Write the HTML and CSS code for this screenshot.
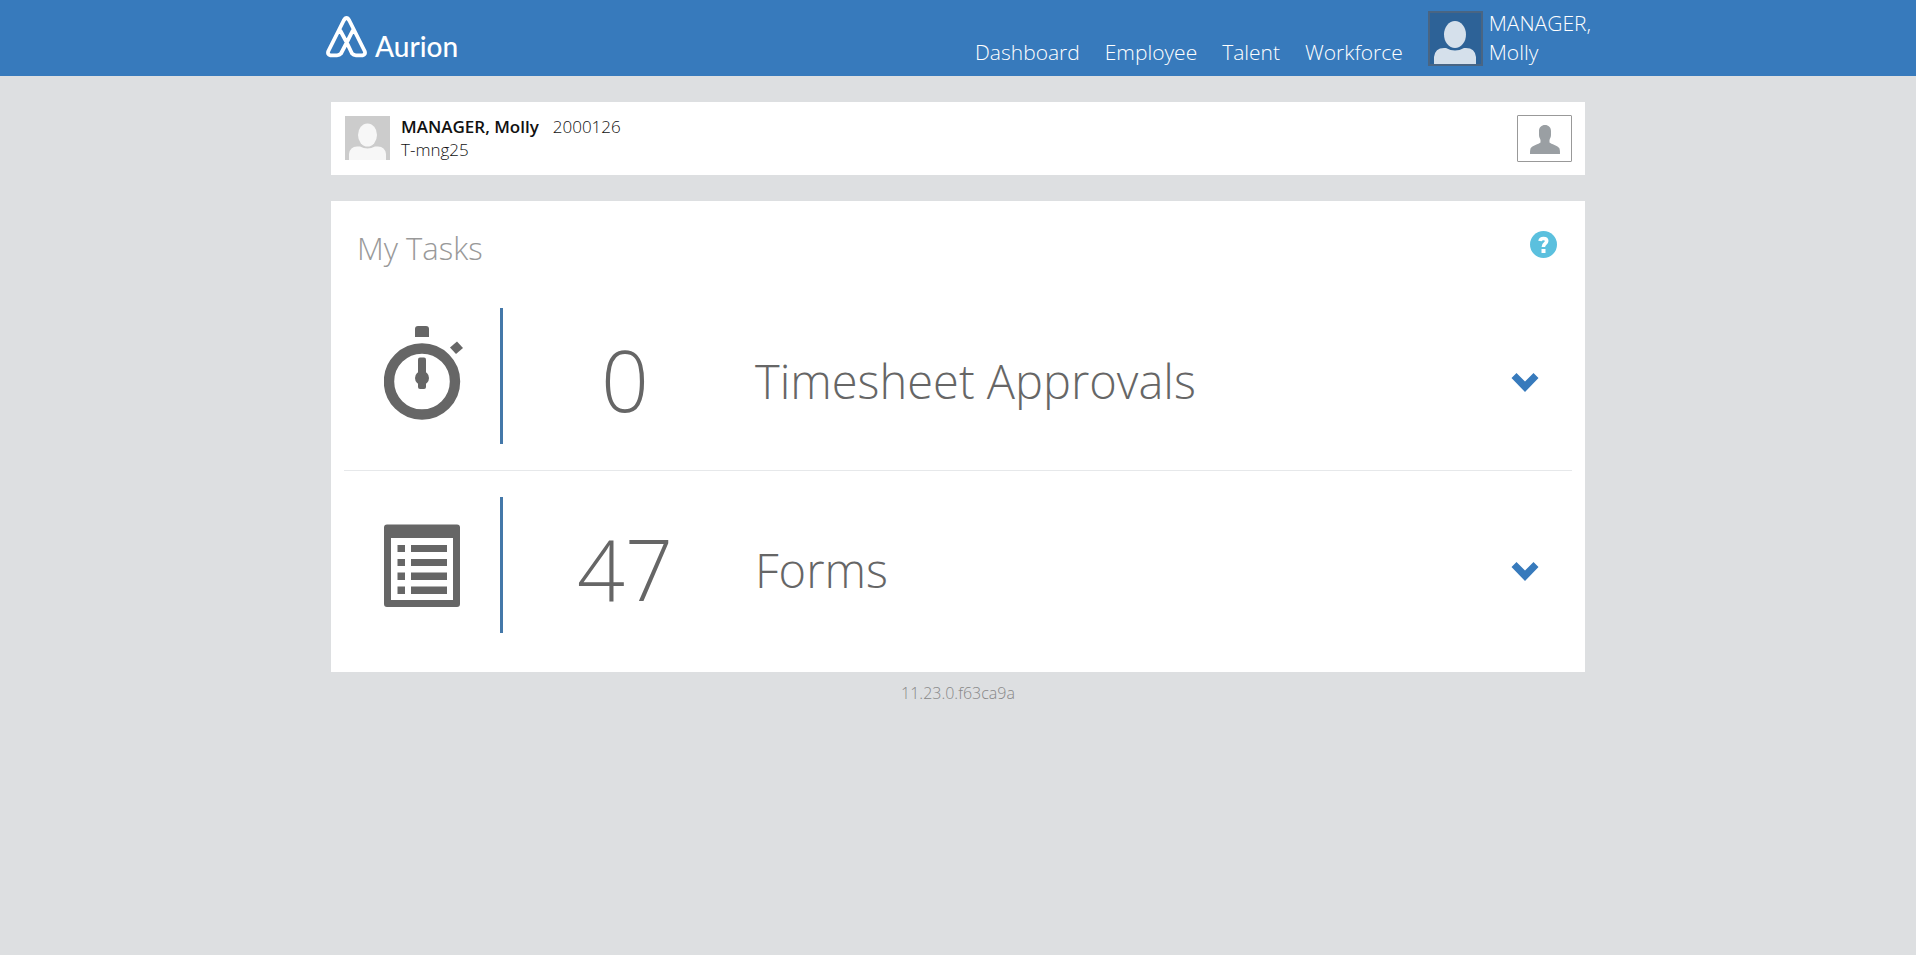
FILE: index.html
```html
<!DOCTYPE html>
<html lang="en">
<head>
<meta charset="utf-8">
<meta name="viewport" content="width=device-width, initial-scale=1">
<title>Aurion</title>
<link rel="stylesheet" href="styles.css">
</head>
<body>
<header class="topbar">
  <div class="topbar-inner">
    <a class="brand" href="#">
      <svg class="brand-mark" viewBox="0 0 42 42" aria-hidden="true">
        <g fill="none" stroke="#fff" stroke-width="3.8" stroke-linejoin="round" stroke-linecap="round">
          <path d="M14.500 15 L21 27 L26 37.500 Q27.500 39.300 30 39.300 H36.500 Q40 38.500 38.600 35 L23.300 4.500 Q20.500 -0.500 17.700 4.500 L2.400 35 Q1 38.500 4.500 39.300 H11 Q13.500 39.300 15 37.500 L20.500 27 L26.500 15"/>
        </g>
      </svg>
      <span class="brand-name">Aurion</span>
    </a>
    <nav class="nav">
      <a href="#">Dashboard</a>
      <a href="#">Employee</a>
      <a href="#">Talent</a>
      <a href="#">Workforce</a>
    </nav>
    <a class="user" href="#">
      <svg class="user-photo" viewBox="0 0 55 55" aria-hidden="true">
        <rect x="1" y="1" width="53" height="53" fill="#2d6297" stroke="#496583" stroke-width="2"/>
        <ellipse cx="27" cy="23.500" rx="11" ry="13.500" fill="#d5e0eb"/>
        <path d="M6 53 V46 Q7 37 16 37 H18 Q27 42 36 37 H38 Q47 37 48 46 V53 Z" fill="#d5e0eb"/>
      </svg>
      <span>MANAGER,<br>Molly</span>
    </a>
  </div>
</header>
<main class="page">
  <section class="card person">
    <svg class="person-photo" viewBox="0 0 45 44" aria-hidden="true">
      <rect width="45" height="44" fill="#ccc"/>
      <ellipse cx="22.500" cy="19" rx="9.500" ry="11.500" fill="#f7f7f7"/>
      <path d="M4 44 V38 Q5 30.500 12 30.500 H15 Q22.500 34.500 30 30.500 H33 Q40 30.500 41 38 V44 Z" fill="#f7f7f7"/>
    </svg>
    <div class="person-text">
      <div><strong>MANAGER, Molly</strong><span class="person-id">2000126</span></div>
      <div>T-mng25</div>
    </div>
    <button class="person-button" type="button" aria-label="Profile">
      <svg width="30" height="29" viewBox="0 0 30 29" aria-hidden="true">
        <path d="M15 0 C18.500 0 21 2.500 21 6 V10 C21 12 20 13.500 19.500 15 V17.500 C21 19 28 20.500 29.500 23.500 Q30 25 30 29 H0 Q0 25 0.500 23.500 C2 20.500 9 19 10.500 17.500 V15 C10 13.500 9 12 9 10 V6 C9 2.500 11.500 0 15 0 Z" fill="#9a9fa3"/>
      </svg>
    </button>
  </section>
  <section class="card tasks">
    <div class="tasks-head">
      <h1>My Tasks</h1>
      <button class="plain" type="button" aria-label="Help">
        <svg width="27" height="27" viewBox="0 0 27 27" aria-hidden="true">
          <circle cx="13.500" cy="13.500" r="13.500" fill="#5bc0de"/>
          <path d="M10 10 Q10.500 7.500 13.500 7.500 Q16.700 7.500 16.700 10 Q16.700 11.500 15 12.700 Q13.400 13.800 13.400 16" fill="none" stroke="#fff" stroke-width="3.600"/>
          <rect x="11.500" y="18" width="4" height="4" fill="#fff"/>
        </svg>
      </button>
    </div>
    <article class="task">
      <div class="task-icon">
        <svg width="80" height="100" viewBox="0 0 80 100" aria-hidden="true">
          <g fill="#666">
            <path d="M31 11 V3 Q31 0 34 0 H42 Q45 0 45 3 V11 Z"/>
            <path d="M73 15.500 L79 22 L72 28 L66 21.500 Z"/>
            <rect x="34" y="31.500" width="8" height="31.500" rx="2"/>
            <circle cx="38" cy="52" r="7"/>
          </g>
          <circle cx="38" cy="55.500" r="33" fill="none" stroke="#666" stroke-width="10.400"/>
        </svg>
      </div>
      <div class="task-count">0</div>
      <h2>Timesheet Approvals</h2>
      <button class="plain toggle" type="button" aria-label="Show timesheet approvals">
        <svg width="28" height="20" viewBox="0 0 28 20" aria-hidden="true"><path d="M0.500 5 L5.500 0 L14 8.500 L22.500 0 L27.500 5 L14 19 Z" fill="#377abc"/></svg>
      </button>
    </article>
    <article class="task">
      <div class="task-icon">
        <svg width="80" height="86" viewBox="0 -2 80 86" aria-hidden="true">
          <path fill="#666" fill-rule="evenodd" d="M3 0.500 H73 Q76 0.500 76 3.500 V80 Q76 83 73 83 H3 Q0 83 0 80 V3.500 Q0 0.500 3 0.500 Z M7 14 V76 H69 V14 Z"/>
          <path fill="#666" d="M13.500 21 H21 V28 H13.500 Z M27 21 H63 V28 H27 Z M13.500 35 H21 V42 H13.500 Z M27 35 H63 V42 H27 Z M13.500 48.500 H21 V56 H13.500 Z M27 48.500 H63 V56 H27 Z M13.500 62.500 H21 V70 H13.500 Z M27 62.500 H63 V70 H27 Z"/>
        </svg>
      </div>
      <div class="task-count">47</div>
      <h2>Forms</h2>
      <button class="plain toggle" type="button" aria-label="Show forms">
        <svg width="28" height="20" viewBox="0 0 28 20" aria-hidden="true"><path d="M0.500 5 L5.500 0 L14 8.500 L22.500 0 L27.500 5 L14 19 Z" fill="#377abc"/></svg>
      </button>
    </article>
  </section>
  <footer class="version">11.23.0.f63ca9a</footer>
</main>
</body>
</html>
```
FILE: styles.css
```css
* { box-sizing: border-box; }
body {
  margin: 0;
  background: #dddfe1;
  color: #222;
  font-family: "Open Sans", "Liberation Sans", sans-serif;
  font-weight: 300;
}
a { color: inherit; text-decoration: none; }
svg { display: block; flex: none; }
h1, h2 { margin: 0; font-weight: 300; }
button { font: inherit; cursor: pointer; }
.plain { padding: 0; border: 0; background: none; }

.topbar { background: #377abc; color: #fff; }
.topbar-inner {
  display: flex;
  align-items: flex-end;
  max-width: 1266px;
  min-height: 76px;
  margin: 0 auto;
  padding: 0 0 9px 1px;
}
.brand {
  display: flex;
  align-items: flex-end;
  gap: 7px;
  margin-right: auto;
  padding-bottom: 9px;
}
.brand-mark { width: 42px; height: 42px; }
.brand-name {
  font-family: Lato, "Open Sans", sans-serif;
  font-weight: 500;
  font-size: 28px;
  line-height: 24px;
}
.nav { display: flex; gap: 25px; font-size: 21px; line-height: 29px; }
.user {
  display: flex;
  align-items: flex-end;
  gap: 6px;
  margin-left: 25px;
  font-size: 21px;
  line-height: 29px;
}
.user-photo { width: 55px; height: 55px; margin-bottom: 1px; }

.page { max-width: 1254px; margin: 0 auto; padding-top: 26px; }
.card { background: #fff; margin-bottom: 26px; }

.person {
  display: flex;
  align-items: flex-start;
  gap: 11px;
  min-height: 73px;
  padding: 13px 13px 12px 14px;
  color: #111;
  font-size: 17px;
  line-height: 23px;
}
.person-photo { width: 45px; height: 44px; margin-top: 1px; }
.person strong { font-weight: 600; }
.person-id { margin-left: 14px; }
.person-button {
  display: flex;
  align-items: center;
  justify-content: center;
  width: 55px;
  height: 47px;
  margin-left: auto;
  padding: 2px 0 0;
  border: 1px solid #999;
  border-radius: 1px;
  background: #fff;
}

.tasks { padding: 0 13px 13px; margin-bottom: 8px; }
.tasks-head {
  display: flex;
  align-items: center;
  justify-content: space-between;
  padding: 26px 15px 12px 13px;
}
.tasks-head h1 { color: #999; font-size: 31px; line-height: 43px; }
.tasks-head .plain { margin-bottom: 8px; }
.task {
  display: grid;
  grid-template-columns: 159px 242px 1fr 28px;
  align-items: center;
  padding: 26px 33px 26px 0;
  color: #666;
}
.task + .task { border-top: 1px solid #e6e8ea; }
.task-icon {
  display: flex;
  align-items: center;
  justify-content: flex-end;
  height: 136px;
  padding-right: 36px;
  border-right: 3px solid #4478a9;
}
.task-count { padding: 6px 0 0 2px; font-size: 84px; line-height: 115px; text-align: center; }
.task h2 { padding: 9px 0 0 10px; font-size: 47px; line-height: 66px; }
.toggle { padding-top: 14px; }
.version { color: #888; font-size: 16px; line-height: 26px; text-align: center; }
```
